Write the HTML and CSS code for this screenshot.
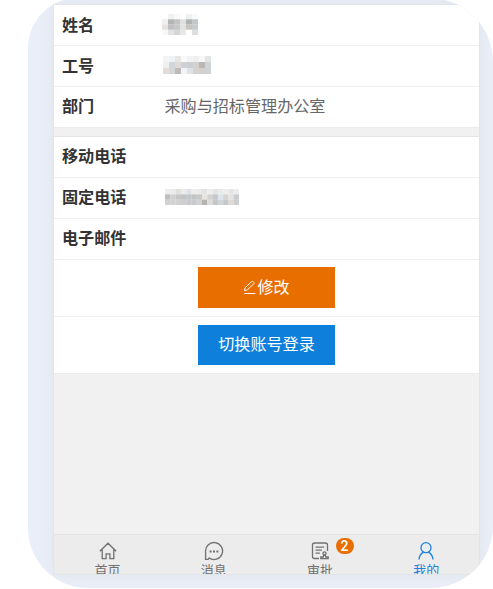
FILE: index.html
```html
<!DOCTYPE html>
<html lang="zh-CN">
<head>
<meta charset="utf-8">
<title>我的</title>
<link rel="stylesheet" href="styles.css">
</head>
<body>
<div class="frame">
  <main class="phone">
    <section class="group">
      <div class="row"><span class="label">姓名</span><svg class="mosaic mosaic-name" data-cols="6" data-cells="fffffff0f2f2f9f9f9ffffffeff1f1f9f9f9|f0eeeeb3b5b5c1c3c5e2e0deb1b4b5c4c7c9|e9e1dfbfc1c1c5c7c9e4e2e0c7c5c2c9cccf|f8f8f8e2e3e3d4d5d6e9e8e8ffffffdcdfdf"></svg></div>
      <div class="row"><span class="label">工号</span><svg class="mosaic mosaic-id" data-cols="8" data-cells="f4f4f4f0f1f3e8e6e5fafafaf2f4f4eeefeff8f7f5e2e6e7|f0f0f0d2d5d9dfdad7ced1d5cdcfd1d3d2d1b9b8b6d1d4d7|e4dcd9d5d8dbbdbab8f0f4f7e0e2e4d5d2d0d3d0cdd0d3d4"></svg></div>
      <div class="row last"><span class="label">部门</span><span class="value">采购与招标管理办公室</span></div>
    </section>
    <section class="group contact">
      <div class="row"><span class="label">移动电话</span></div>
      <div class="row"><span class="label">固定电话</span><svg class="mosaic mosaic-phone" data-cols="14" data-cells="eeeeeee9ebece0e0deebebebdee2e5efedeaebebebe2e2e0eeeeeee2e5e6e9eaeaefece9e7e5e3eeeeee|bebebed0cfcec5c5c5c3c3c5c4c5c7c3c4c5c7c7c7e8e5e0d2d2d2c6c7c9dde5ecd5d4d1e2e4e6c9cbcc|d2d0d0d2d2d0d1d1d1cdcfd1c8cacec9cacdd3d3d1b5b4b0dddcdac6c6c7d0d5d9c6c7caded9d5cdcfcf"></svg></div>
      <div class="row"><span class="label">电子邮件</span></div>
      <div class="action"><button class="btn orange"><svg class="pen" viewBox="0 0 14 15"><path d="M1.5 10.5 2 7.8 8.6 1.7q.8-.7 1.7.1l.5.6q.7.8-.1 1.5L4.2 10z M1.3 13.5h11"/></svg>修改</button></div>
      <div class="action"><button class="btn blue">切换账号登录</button></div>
    </section>
    <nav class="tabs">
      <a class="tab"><svg class="icon" viewBox="0 0 20 20"><path d="M1.8 10.2 10 2.2l8.2 8M4.2 8.4v9.3h3.9v-4.9h3.8v4.9h3.9V8.4"/></svg><span>首页</span></a>
      <a class="tab"><svg class="icon" viewBox="0 0 20 20"><path d="M1.6 18.3V11a8.5 8.5 0 1 1 3.6 6l-1 1.3z"/><path class="dots" d="M5.6 10.5h2m1.4 0h2m1.4 0h2"/></svg><span>消息</span></a>
      <a class="tab"><svg class="icon" viewBox="0 0 20 20"><path d="M17.5 10V4q0-2-2-2h-11q-2 0-2 2v11.5q0 2 2 2H9M5.6 6.1h8.5M5.6 9.2h6.3M5.6 12.2h4.2M10.8 17.6v-1.6h2.4l.6-2h1.4l.6 2h2.4v1.6z"/><circle cx="14.5" cy="12.4" r="1.5"/></svg><span>审批</span><b class="badge">2</b></a>
      <a class="tab active"><svg class="icon" viewBox="0 0 20 20"><circle cx="10" cy="6.7" r="5"/><path d="M3 18.5c.4-4 2-6 4.6-7.3M17 18.5c-.4-4-2-6-4.6-7.3"/></svg><span>我的</span></a>
    </nav>
  </main>
</div>
<script src="mosaic.js"></script>
</body>
</html>
```
FILE: styles.css
```css
* { box-sizing: border-box; }

body {
  margin: 0;
  height: 589px;
  overflow: hidden;
  background: #fff;
  font-family: "Noto Sans CJK SC", sans-serif;
}

.frame {
  width: 465px;
  height: 590px;
  margin: -2px 0 0 28px;
  padding: 7px 13px 14px 26px;
  overflow: hidden;
  border-radius: 50px 64px 62px 60px;
  background: #e9eef8;
}

.phone {
  display: flex;
  flex-direction: column;
  width: 425px;
  height: 569px;
  overflow: hidden;
  background: #f1f1f1;
  box-shadow: 0 0 0 1px #e1e5e8, 0 0 14px #dde3ea;
}

.group {
  background: #fff;
  border-bottom: 1px solid #ececec;
}

.contact {
  margin-top: 8px;
  border-top: 1px solid #e5e5e5;
}

.row {
  display: flex;
  align-items: center;
  height: 41px;
  padding: 0 0 2px 8px;
  border-bottom: 1px solid #f0f0f0;
  font-size: 16.1px;
  line-height: 24px;
}

.contact .row { padding-bottom: 5px; }

.row.last {
  height: 40px;
  padding-bottom: 4px;
  border-bottom: 0;
}

.label {
  width: 102.5px;
  color: #333;
  font-weight: 700;
}

.value { color: #666; }

.mosaic { display: block; }
.mosaic-name { width: 36px; height: 21px; margin-left: -2.5px; }
.mosaic-id { width: 48px; height: 18px; margin-left: -1.5px; }
.mosaic-phone { width: 74px; height: 16px; margin: 2px 0 0 .5px; }

.action {
  display: flex;
  justify-content: center;
  align-items: center;
  height: 57px;
  padding-bottom: 1px;
  border-bottom: 1px solid #f0f0f0;
}

.action:last-child {
  height: 56px;
  padding-bottom: 0;
  border-bottom: 0;
}

.btn {
  display: flex;
  align-items: center;
  justify-content: center;
  width: 137px;
  height: 41px;
  padding: 0 0 4px;
  border: 0;
  color: #fff;
  font: 16.1px/24px "Noto Sans CJK SC", sans-serif;
}

.orange { background: #e86e00; }
.blue { height: 40px; background: #0e80dc; }

.pen {
  width: 14px;
  height: 15px;
  margin-top: 4px;
  fill: none;
  stroke: #fff;
  stroke-width: 1;
}

.tabs {
  display: flex;
  height: 40px;
  margin-top: auto;
  border-top: 1px solid #e3e3e3;
  background: #ececec;
}

.tab {
  position: relative;
  flex: 1;
  display: flex;
  flex-direction: column;
  align-items: center;
  padding: 6px 0 0 1px;
  color: #707070;
  font-size: 13px;
  line-height: 18px;
}

.tab.active { color: #1d82dc; }

.icon {
  flex: none;
  width: 20px;
  height: 20px;
  fill: none;
  stroke: currentColor;
  stroke-width: 1.3;
}

.dots { stroke-width: 1.8; }

.badge {
  position: absolute;
  top: 3px;
  left: 69px;
  width: 18px;
  height: 16px;
  border-radius: 8px;
  background: #e86e00;
  color: #fff;
  font: 500 14px/16px Roboto, sans-serif;
  text-align: center;
}
```
FILE: mosaic.js
```js
// Paints masked values as a grid of coloured cells.
document.querySelectorAll('.mosaic').forEach(svg => {
  const rows = svg.dataset.cells.split('|');
  const cols = Number(svg.dataset.cols);
  svg.setAttribute('viewBox', `0 0 ${cols} ${rows.length}`);
  svg.setAttribute('preserveAspectRatio', 'none');
  rows.forEach((row, y) => {
    row.match(/.{6}/g).forEach((color, x) => {
      const rect = document.createElementNS('http://www.w3.org/2000/svg', 'rect');
      rect.setAttribute('x', x);
      rect.setAttribute('y', y);
      rect.setAttribute('width', 1.02);
      rect.setAttribute('height', 1.02);
      rect.setAttribute('fill', '#' + color);
      svg.appendChild(rect);
    });
  });
});
```
